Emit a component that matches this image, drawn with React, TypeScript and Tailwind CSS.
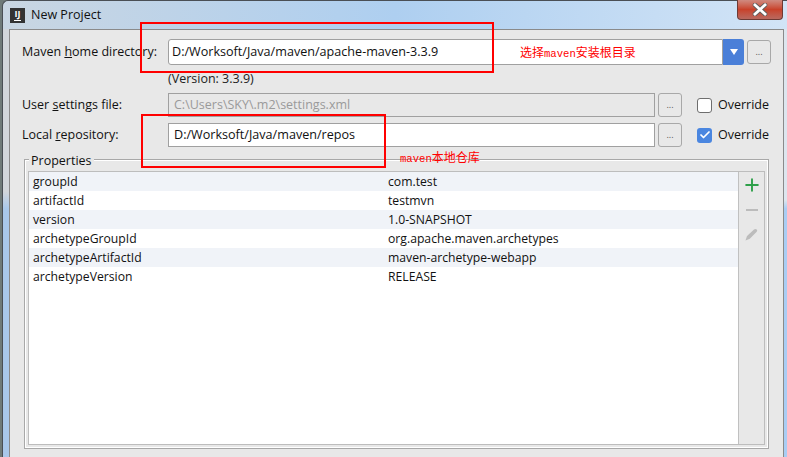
import { Check, Plus } from "lucide-react";

const rows = [
  ["groupId", "com.test"],
  ["artifactId", "testmvn"],
  ["version", "1.0-SNAPSHOT"],
  ["archetypeGroupId", "org.apache.maven.archetypes"],
  ["archetypeArtifactId", "maven-archetype-webapp"],
  ["archetypeVersion", "RELEASE"],
];

function DotsButton() {
  return (
    <div className="w-[24px] h-[24px] shrink-0 border border-[#a8a8a8] rounded-[3px] flex items-center justify-center text-[9px] leading-none text-[#555] pb-[2px]">
      ...
    </div>
  );
}

function Label({ pre, mark, rest }: { pre: string; mark: string; rest: string }) {
  return (
    <div className="w-[146px] shrink-0 text-[12.5px] text-[#111] whitespace-nowrap">
      {pre}
      <span className="underline">{mark}</span>
      {rest}
    </div>
  );
}

export default function App() {
  return (
    <div className="relative w-[787px] h-[457px] overflow-hidden bg-[#6f7a78] pl-[2px] font-['Open_Sans','Noto_Sans',sans-serif]">
      <div className="h-full flex flex-col rounded-tl-[6px] border-l border-t border-[#4a4f55] bg-gradient-to-r from-[#c9d6e2] via-[#aecff0] to-[#d2e4f6]">
        <div className="h-[28px] shrink-0 flex items-center pl-[7px] gap-[6px]">
          <div className="w-[15px] h-[15px] bg-[#333] text-white text-[9px] font-bold leading-[11px] flex flex-col items-center">
            IJ
            <div className="w-[7px] h-px bg-white mt-px" />
          </div>
          <span className="text-[12.5px] text-[#111]">New Project</span>
        </div>

        <div className="flex-1 flex">
          <div className="w-[6px] shrink-0 bg-gradient-to-b from-[#d2d6da] from-[38%] to-[#a9c8ea] to-[42%]" />
          <div className="w-[775px] shrink-0 bg-[#e8e8e8] border border-[#8a8a8a] border-b-0 pl-[12px] pr-[12px] pt-[9px]">
            <div className="flex items-center h-[26px]">
              <Label pre="Maven " mark="h" rest="ome directory:" />
              <div className="flex-1 h-[26px] bg-white border border-[#a0a0a0] rounded-l-[3px] text-[12.6px] text-[#111] pl-[3px] flex items-center">
                D:/Worksoft/Java/maven/apache-maven-3.3.9
              </div>
              <div className="w-[21px] h-[26px] bg-[#4a7fd8] rounded-r-[3px] flex items-center justify-center">
                <div className="w-0 h-0 border-l-[4px] border-r-[4px] border-t-[6px] border-l-transparent border-r-transparent border-t-white" />
              </div>
              <div className="ml-[3px]">
                <DotsButton />
              </div>
            </div>

            <div className="pl-[146px] pt-[1px] h-[28px] flex items-center text-[12.5px] text-[#222]">(Version: 3.3.9)</div>

            <div className="flex items-center h-[24px]">
              <Label pre="User " mark="s" rest="ettings file:" />
              <div className="w-[487px] h-[24px] border border-[#a0a0a0] text-[12.5px] text-[#9a9a9a] pl-[5px] flex items-center">
                C:\Users\SKY\.m2\settings.xml
              </div>
              <div className="ml-[3px]">
                <DotsButton />
              </div>
              <div className="ml-[15px] w-[15px] h-[15px] bg-white border border-[#6e6e6e] rounded-[3px]" />
              <span className="ml-[6px] text-[12.5px] text-[#111]">Override</span>
            </div>

            <div className="flex items-center h-[24px] mt-[6px]">
              <Label pre="Local " mark="r" rest="epository:" />
              <div className="w-[487px] h-[24px] bg-white border border-[#a0a0a0] text-[12.6px] text-[#111] pl-[5px] flex items-center">
                D:/Worksoft/Java/maven/repos
              </div>
              <div className="ml-[3px]">
                <DotsButton />
              </div>
              <div className="ml-[15px] w-[15px] h-[15px] bg-[#4a86e0] rounded-[3px] flex items-center justify-center">
                <Check size={12} strokeWidth={3.5} className="text-white" />
              </div>
              <span className="ml-[6px] text-[12.5px] text-[#111]">Override</span>
            </div>

            <div className="relative mt-[12px] ml-[2px] w-[745px] h-[290px] border border-[#a8a8a8] shadow-[inset_0_0_0_1px_#fff] pt-[11px] pb-[3px] px-[3px]">
              <div className="absolute left-[4px] top-[-8px] bg-[#e8e8e8] px-[2px] text-[12.5px] leading-[18px] text-[#111]">
                Properties
              </div>
              <div className="h-full flex border border-[#bdbdbd]">
                <div className="flex-1 bg-white">
                  {rows.map(([name, value], i) => (
                    <div key={name} className={`flex items-center h-[19px] pt-[2px] text-[12.2px] text-[#111] ${i % 2 === 0 ? "bg-[#f0f3f8]" : "bg-white"}`}>
                      <div className="w-[359px] pl-[4px]">{name}</div>
                      <div>{value}</div>
                    </div>
                  ))}
                </div>
                <div className="w-[26px] border-l border-[#c0c0c0] flex flex-col items-center">
                  <div className="h-[25px] flex items-center">
                    <Plus size={20} strokeWidth={2.3} className="text-[#2ea04a]" />
                  </div>
                  <div className="h-[25px] flex items-center">
                    <div className="w-[12px] h-[2px] bg-[#bcbcbc]" />
                  </div>
                  <div className="h-[25px] flex items-center">
                    <svg width="13" height="13" viewBox="0 0 13 13">
                      <path d="M0.5 12.5 L2 8 L9 1.5 Q10.5 0.3 11.8 1.5 Q12.8 2.8 11.5 4 L4.8 10.8 Z" fill="#bcbcbc" />
                    </svg>
                  </div>
                </div>
              </div>
            </div>
          </div>
          <div className="flex-1 bg-gradient-to-b from-[#dde6ee] from-[40%] to-[#a9cdf4] to-[42%]" />
        </div>
      </div>

      <div className="absolute left-[737px] top-0 w-[46px] h-[20px] rounded-b-[4px] border border-[#6e3a34] border-t-0 bg-gradient-to-b from-[#cf8a80] via-[#c8412a] to-[#b9685e] flex items-center justify-center">
        <svg width="16" height="13" viewBox="0 0 16 13">
          <path d="M3 2 L13 11 M13 2 L3 11" stroke="#5d5d5d" strokeWidth="4.6" strokeLinecap="round" />
          <path d="M3 2 L13 11 M13 2 L3 11" stroke="#fff" strokeWidth="2.8" strokeLinecap="square" />
        </svg>
      </div>

      <div className="absolute left-[140px] top-[22px] w-[354px] h-[51px] border-2 border-[#f00]" />
      <div className="absolute left-[141px] top-[114px] w-[245px] h-[54px] border-2 border-[#f00]" />
      <div className="absolute left-[520px] top-[44px] text-[12px] leading-[16px] text-[#f00] font-['Noto_Sans_CJK_SC',sans-serif]">
        选择<span className="font-['Liberation_Mono',monospace] text-[10.6px]">maven</span>安装根目录
      </div>
      <div className="absolute left-[400px] top-[149px] text-[12px] leading-[16px] text-[#f00] font-['Noto_Sans_CJK_SC',sans-serif]">
        <span className="font-['Liberation_Mono',monospace] text-[10.6px]">maven</span>本地仓库
      </div>
    </div>
  );
}
